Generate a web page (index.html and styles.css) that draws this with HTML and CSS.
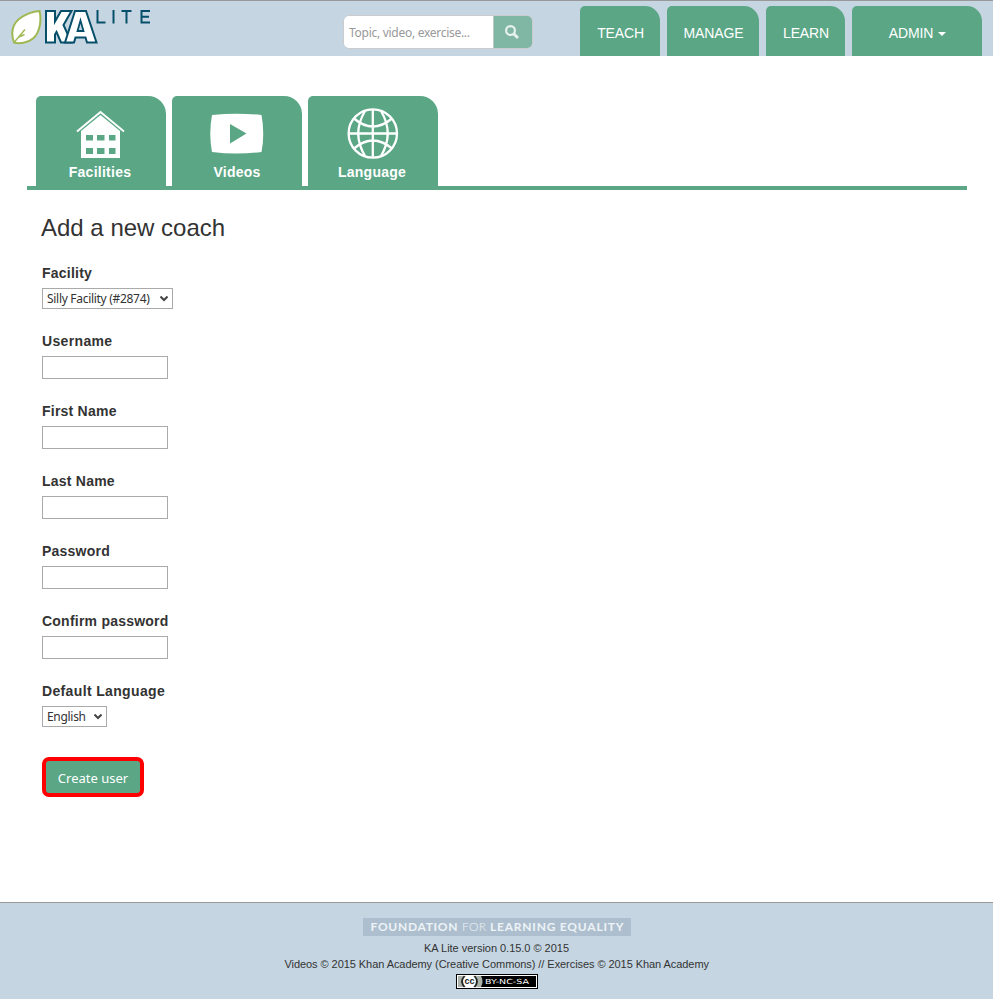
FILE: index.html
```html
<!DOCTYPE html>
<html lang="en">
<head>
<meta charset="utf-8">
<title>Add a new coach | KA Lite</title>
<link rel="stylesheet" href="styles.css">
</head>
<body>
<div class="page">
<header class="topbar">
  <a class="logo">
    <svg width="150" height="44" viewBox="0 0 150 44">
      <path d="M4 41.500C1 33 2 24 9 18C15 13.500 22 10.500 29.500 10C31.500 18 30.500 31 23 37.500C18 42 9 43 4 41.500Z" fill="#fff" stroke="#9fb852" stroke-width="2"/>
      <path d="M4 41.500L15 28.500M9 36L14.500 33.500" fill="none" stroke="#9fb852" stroke-width="1.400"/>
      <g fill="#fff" stroke="#064f6b" stroke-width="2" stroke-linejoin="miter">
        <path d="M36 10H45V20.500L51 10H61.500L53.500 24L61.500 41.500H51L46.500 31L45 33.500V41.500H36Z"/>
        <path d="M65 10H76L86.500 41.500H77L75.500 36.500H65.500L64 41.500H55Z"/>
        <path d="M70.500 19.500L67.500 30H73.500Z" fill="#c5d6e2" stroke-width="1.800"/>
      </g>
      <path d="M87.500 9V21.500H95.500M103.500 9V22.500M111.500 10H121.500M116.500 10V22.500M140 10H131.500V21.500H140M131.500 15.700H139" fill="none" stroke="#064f6b" stroke-width="2"/>
    </svg>
  </a>
  <form class="search">
    <input class="search-input" type="text" placeholder="Topic, video, exercise...">
    <button class="search-button" type="button" aria-label="Search">
      <svg width="14" height="14" viewBox="0 0 14 14" fill="none" stroke="#e6f1ed"><circle cx="5.500" cy="5.500" r="4.400" stroke-width="2.200"/><path d="M8.600 8.600L13 13" stroke-width="2.900"/></svg>
    </button>
  </form>
  <nav class="nav">
    <a class="nav-item teach">TEACH</a>
    <a class="nav-item manage">MANAGE</a>
    <a class="nav-item learn">LEARN</a>
    <a class="nav-item admin">ADMIN <span class="caret"></span></a>
  </nav>
</header>
<main class="content">
  <nav class="tabs">
    <a class="tab">
      <svg width="56" height="52" viewBox="0 0 56 52"><path d="M4 23.500L27.500 4L51 23.500" fill="none" stroke="#fff" stroke-width="2"/><path d="M27.500 7L47 23V50H8V23Z" fill="#fff"/><path d="M13 27H20V32.500H13ZM24 27H31.500V32.500H24ZM36 27H42.500V32.500H36ZM13 40H20V46H13ZM24 40H31.500V46H24ZM36 40H42.500V46H36Z" fill="#5aa685"/></svg>
      <span class="nudge">Facilities</span>
    </a>
    <a class="tab">
      <svg width="56" height="52" viewBox="0 0 56 52"><path d="M3 7Q28 4.500 52.500 7Q56 26 52.500 44Q28 47 3 44Q-.5 26 3 7Z" fill="#fff"/><path d="M21 16V35.500L37.500 25.500Z" fill="#5aa685"/></svg>
      <span>Videos</span>
    </a>
    <a class="tab">
      <svg width="56" height="52" viewBox="0 0 56 52" fill="none" stroke="#fff" stroke-width="2.300"><circle cx="27.800" cy="25.500" r="24.200"/><path d="M27.800 1V50M4 25.500H52M20 3C11 18 11 33 20 48M36 3C45 18 45 33 36 48M9 10.500Q27.800 26.500 47 10.500M9 40.500Q27.800 24.500 47 40.500"/></svg>
      <span class="nudge">Language</span>
    </a>
  </nav>
  <form class="form">
    <h2>Add a new coach</h2>
    <div class="field choice"><label>Facility</label><div class="select facility"><span>Silly Facility (#2874)</span><svg width="8" height="6" viewBox="0 0 8 6"><path d="M.5 .5L4 4L7.500 .5" fill="none" stroke="#444" stroke-width="2"/></svg></div></div>
    <div class="field"><label for="username" class="wide">Username</label><input id="username" type="text"></div>
    <div class="field"><label for="first">First Name</label><input id="first" type="text"></div>
    <div class="field"><label for="last">Last Name</label><input id="last" type="text"></div>
    <div class="field"><label for="password">Password</label><input id="password" type="password"></div>
    <div class="field"><label for="confirm">Confirm password</label><input id="confirm" type="password"></div>
    <div class="field choice"><label class="wide">Default Language</label><div class="select language"><span>English</span><svg width="8" height="6" viewBox="0 0 8 6"><path d="M.5 .5L4 4L7.500 .5" fill="none" stroke="#444" stroke-width="2"/></svg></div></div>
    <button class="submit" type="button">Create user</button>
  </form>
</main>
<footer class="footer">
  <div class="fle"><svg width="268" height="18" viewBox="0 0 268 18" fill="#edf3f7"><text x="7.500" y="13" textLength="87" class="fle-bold">FOUNDATION</text><text x="99" y="13" textLength="24" class="fle-thin">FOR</text><text x="127" y="13" textLength="133.500" class="fle-bold">LEARNING EQUALITY</text></svg></div>
  <div class="line"><svg width="430" height="16" fill="#333"><text x="142" y="12" textLength="145">KA Lite version 0.15.0 © 2015</text></svg></div>
  <div class="line"><svg width="430" height="16" fill="#333"><text x="2.500" y="12" textLength="424.500">Videos © 2015 Khan Academy (Creative Commons) // Exercises © 2015 Khan Academy</text></svg></div>
  <svg class="license" width="82" height="15" viewBox="0 0 82 15"><path d="M0 0H82V15H0Z"/><path d="M1 1H81V14H1Z" fill="#fff"/><path d="M2 2H80V13H2Z"/><path d="M2 2H25Q28 7.500 25 13H2Z" fill="#abb3aa"/><circle cx="13.500" cy="7.500" r="6.500" fill="#fff"/><path d="M8.500 2Q3.500 7.500 8.500 13M18.500 2Q23.500 7.500 18.500 13" fill="none" stroke="#222" stroke-width="1.600"/><text x="8.500" y="10" textLength="10" class="cc">cc</text><text x="29" y="10" textLength="44" lengthAdjust="spacingAndGlyphs" class="terms">BY-NC-SA</text></svg>
</footer>
</div>
</body>
</html>
```
FILE: styles.css
```css
* { box-sizing: border-box; }
body { margin: 0; background: #fff; color: #333; font-family: "Liberation Sans", Arial, sans-serif; font-size: 14px; }
.page { width: 993px; height: 999px; display: flex; flex-direction: column; }
.topbar { height: 56px; flex: none; display: flex; align-items: flex-start; background: #c5d6e2; border-top: 1px solid #999; }
.logo { width: 343px; padding-left: 10px; }
.logo svg { display: block; }
.search { display: flex; width: 190px; height: 34px; margin-top: 14px; border: 1px solid #ccc; border-radius: 6px; overflow: hidden; }
.search-input { width: 149px; border: 0; padding: 1px 5px 0; background: #fff; font: 12px "Noto Sans", sans-serif; letter-spacing: -.28px; outline: 0; }
.search-input::placeholder { color: #999; opacity: 1; }
.search-button { flex: 1; border: 0; border-left: 1px solid #bbc9c4; padding: 0 2px 0 0; background: #7fb7a4; display: flex; align-items: center; justify-content: center; }
.nav { display: flex; gap: 7px; margin: 5px 0 0 47px; }
.nav-item { height: 50px; display: flex; align-items: center; justify-content: center; padding: 4px 0 0 1px; background: #5aa685; color: #fff; border-radius: 5px 15px 0 0; letter-spacing: -.15px; }
.teach { width: 80px; }
.manage { width: 92px; }
.learn { width: 79px; }
.admin { width: 130px; }
.caret { margin: 1px 0 0 5px; border: 4px solid transparent; border-top-color: #fff; border-bottom: 0; }
.content { flex: 1; padding: 40px 26px 0 27px; }
.tabs { display: flex; gap: 6px; height: 94px; padding-left: 9px; border-bottom: 4px solid #5aa685; }
.tab { width: 130px; padding-top: 12px; display: flex; flex-direction: column; align-items: center; background: #5aa685; border-radius: 5px 18px 0 0; color: #fff; font-weight: bold; font-size: 14px; line-height: 16px; letter-spacing: .25px; }
.tab svg { flex: none; margin-bottom: 4px; }
.nudge { padding-right: 2px; }
.form { padding: 23px 0 0 15px; }
h2 { margin: 0 0 21px -1px; font-size: 24px; line-height: 30px; font-weight: normal; }
.field { height: 70px; }
.choice { height: 68px; }
label { display: block; height: 22px; line-height: 18px; font-weight: bold; letter-spacing: .23px; }
.wide { letter-spacing: .35px; }
.field input { display: block; width: 126px; height: 23px; margin-top: 2px; border: 1px solid #aaa; padding: 2px; background: #fff; }
.select { display: flex; align-items: center; justify-content: space-between; height: 21px; margin-top: 2px; padding: 0 4px; border: 1px solid #aaa; font: 12px "Noto Sans", sans-serif; white-space: nowrap; letter-spacing: -.3px; }
.select svg { flex: none; }
.facility { width: 131px; }
.language { width: 65px; }
.submit { display: block; width: 102px; height: 40px; margin-top: 7px; padding: 2px 0 0; border: 4px solid #f00; border-radius: 7px; background: #5aa685; color: #fff; font: 13px "Noto Sans", sans-serif; }
.footer { height: 97px; flex: none; display: flex; flex-direction: column; align-items: center; padding-top: 15px; background: #c5d6e2; border-top: 1px solid #999; font-size: 11px; }
.footer svg { display: block; }
.fle { height: 18px; margin-bottom: 4px; background: #adbfce; }
.fle-bold { font: bold 12px Lato, sans-serif; }
.fle-thin { font: 300 12px Lato, sans-serif; }
.line { height: 16px; }
.footer .license { margin-top: 2px; }
.cc { font: bold 9px "Liberation Sans", sans-serif; fill: #222; }
.terms { font: 7px "DejaVu Sans", sans-serif; fill: #fff; }
```
